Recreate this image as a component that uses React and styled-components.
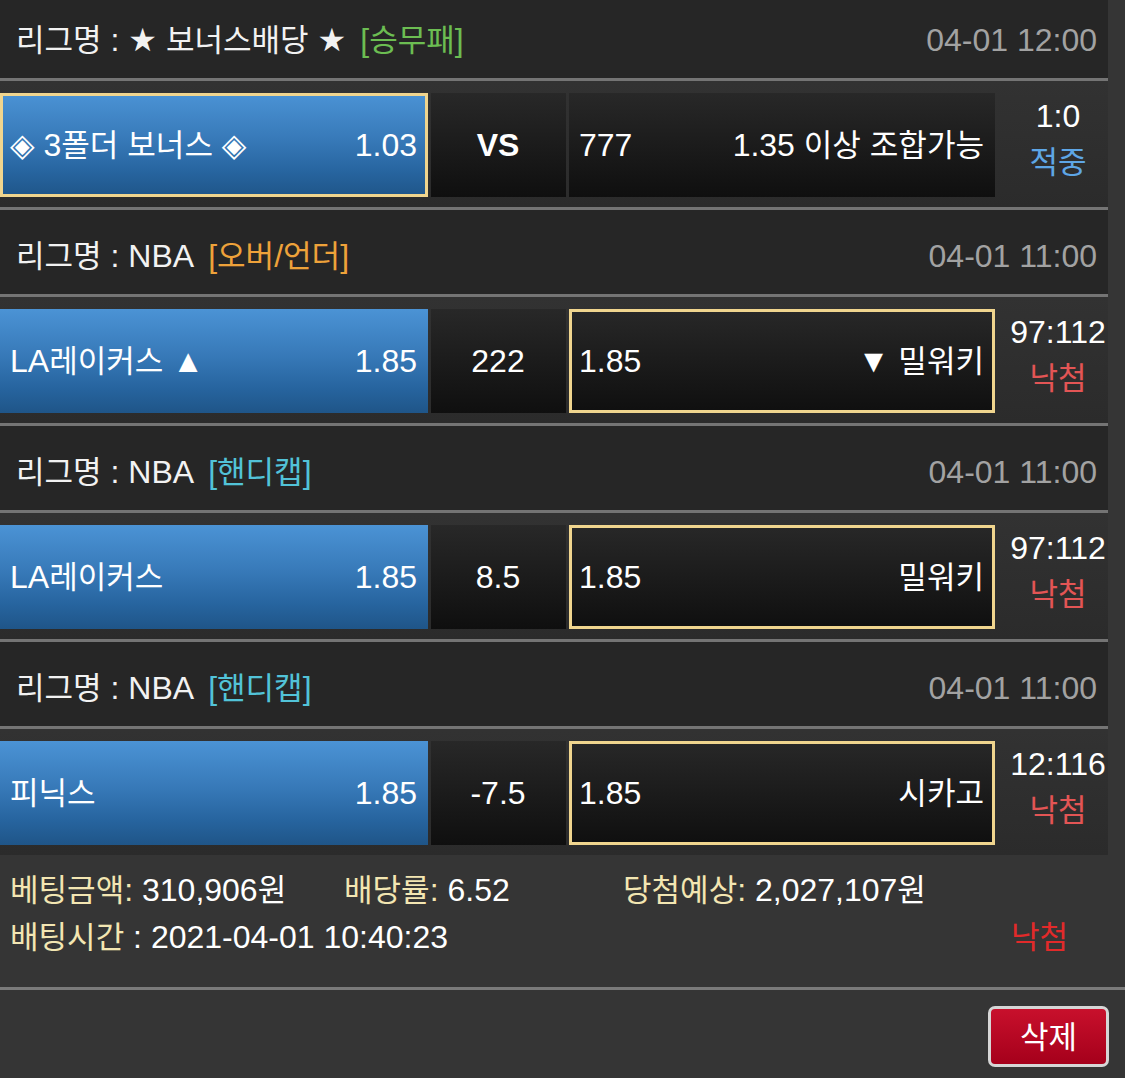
import React from "react";
import styled, { createGlobalStyle } from "styled-components";

const GlobalStyle = createGlobalStyle`
  html, body { margin: 0; padding: 0; background: #353535; }
  body {
    font-family: "Liberation Sans", Arial, "DejaVu Sans", "Noto Sans CJK KR", sans-serif;
    color: #fff;
    -webkit-font-smoothing: antialiased;
  }
`;

const Page = styled.div`
  width: 1125px;
  height: 1078px;
  overflow: hidden;
  background: #353535;
`;

const List = styled.div`
  width: 1108px;
  margin-top: -6px;
`;

const Block = styled.section`
  border-bottom: 3px solid #747474;
  &:last-child { border-bottom: none; }
`;

const Header = styled.div`
  height: 87px;
  box-sizing: border-box;
  padding: 8px 11px 0 16px;
  display: flex;
  align-items: center;
  justify-content: space-between;
  background: #262626;
  border-bottom: 3px solid #747474;
  font-size: 32px;
  line-height: 40px;
  white-space: nowrap;
`;

const LeagueName = styled.div`
  color: #f2f2f2;
`;

const Tag = styled.span`
  margin-left: 14px;
  color: ${(p) => p.$color};
`;

const Time = styled.div`
  color: #a2a2a2;
`;

const K = styled.span`
  font-family: "Noto Sans CJK KR", sans-serif;
  font-size: 0.97em;
  letter-spacing: 0;
  line-height: 1;
`;

const MatchRow = styled.div`
  height: 126px;
  box-sizing: border-box;
  padding: 12px 0 10px;
  display: grid;
  grid-template-columns: 428px 135px 426px 1fr;
  column-gap: 3px;
  background: linear-gradient(#323232, #2b2b2b);
`;

const Cell = styled.div`
  box-sizing: border-box;
  display: flex;
  align-items: center;
  justify-content: ${(p) => (p.$center ? "center" : "space-between")};
  padding: 0 8px 0 7px;
  border: 3px solid ${(p) => (p.$sel ? "#f0d58e" : "transparent")};
  background: ${(p) =>
    p.$blue
      ? "linear-gradient(#4b93d5 0%, #3779b8 45%, #2765a0 75%, #1f5588 100%)"
      : "linear-gradient(#282828, #0f0f0f)"};
  background-origin: border-box;
  font-size: 32px;
  line-height: 40px;
  font-weight: ${(p) => (p.$bold ? 700 : 400)};
  white-space: nowrap;
  color: #fff;
`;

const Result = styled.div`
  padding-left: 10px;
  display: flex;
  flex-direction: column;
  align-items: center;
  font-size: 32px;
  line-height: 46px;
  white-space: nowrap;
`;

const Status = styled.span`
  color: ${(p) => p.$color};
`;

const Summary = styled.div`
  padding: 12px 0 26px 10px;
  background: #353535;
  font-size: 32px;
  line-height: 47px;
  white-space: nowrap;
`;

const SumLine = styled.div`
  display: grid;
  grid-template-columns: 334px 279px 1fr;
`;

const SumLine2 = styled.div`
  display: flex;
  justify-content: space-between;
  padding-right: 57px;
`;

const Label = styled.span`
  color: #f3e6b2;
`;

const Lost = styled.span`
  color: #e22a2a;
`;

const Footer = styled.div`
  border-top: 3px solid #7a7a7a;
  padding: 16px 16px 0 0;
  display: flex;
  justify-content: flex-end;
`;

const DeleteButton = styled.button`
  width: 121px;
  height: 61px;
  box-sizing: border-box;
  border: 3px solid #d6d6d6;
  border-radius: 7px;
  background: linear-gradient(#c8102c, #a5001b);
  color: #fff;
  font-size: 32px;
  font-family: inherit;
  line-height: 40px;
  padding: 0;
  cursor: pointer;
`;

function Txt({ s }) {
  return s
    .split(/([\u3131-\u318E\uAC00-\uD7A3]+)/)
    .map((p, i) => (i % 2 ? <K key={i}>{p}</K> : <React.Fragment key={i}>{p}</React.Fragment>));
}

const STATUS = {
  hit: { text: "적중", color: "#5ea6e6" },
  lose: { text: "낙첨", color: "#e35555" },
};

const games = [
  {
    league: "리그명 : ★ 보너스배당 ★",
    tag: "[승무패]",
    tagColor: "#6cbd52",
    time: "04-01 12:00",
    home: "◈ 3폴더 보너스 ◈",
    homeOdds: "1.03",
    mid: "VS",
    bold: true,
    awayOdds: "777",
    away: "1.35 이상 조합가능",
    pick: "home",
    score: "1:0",
    status: "hit",
  },
  {
    league: "리그명 : NBA",
    tag: "[오버/언더]",
    tagColor: "#eea23a",
    time: "04-01 11:00",
    home: "LA레이커스 ▲",
    homeOdds: "1.85",
    mid: "222",
    awayOdds: "1.85",
    away: "▼ 밀워키",
    pick: "away",
    score: "97:112",
    status: "lose",
  },
  {
    league: "리그명 : NBA",
    tag: "[핸디캡]",
    tagColor: "#52c3d8",
    time: "04-01 11:00",
    home: "LA레이커스",
    homeOdds: "1.85",
    mid: "8.5",
    awayOdds: "1.85",
    away: "밀워키",
    pick: "away",
    score: "97:112",
    status: "lose",
  },
  {
    league: "리그명 : NBA",
    tag: "[핸디캡]",
    tagColor: "#52c3d8",
    time: "04-01 11:00",
    home: "피닉스",
    homeOdds: "1.85",
    mid: "-7.5",
    awayOdds: "1.85",
    away: "시카고",
    pick: "away",
    score: "12:116",
    status: "lose",
  },
];

export default function App() {
  return (
    <>
      <GlobalStyle />
      <Page>
        <List>
          {games.map((g, i) => (
            <Block key={i}>
              <Header>
                <LeagueName>
                  <Txt s={g.league} />
                  <Tag $color={g.tagColor}>
                    <Txt s={g.tag} />
                  </Tag>
                </LeagueName>
                <Time>{g.time}</Time>
              </Header>
              <MatchRow>
                <Cell $blue $sel={g.pick === "home"}>
                  <span><Txt s={g.home} /></span>
                  <span>{g.homeOdds}</span>
                </Cell>
                <Cell $center $bold={g.bold}>{g.mid}</Cell>
                <Cell $sel={g.pick === "away"}>
                  <span>{g.awayOdds}</span>
                  <span><Txt s={g.away} /></span>
                </Cell>
                <Result>
                  <span>{g.score}</span>
                  <Status $color={STATUS[g.status].color}>
                    <K>{STATUS[g.status].text}</K>
                  </Status>
                </Result>
              </MatchRow>
            </Block>
          ))}
        </List>
        <Summary>
          <SumLine>
            <span>
              <Label><Txt s="베팅금액:" /></Label> 310,906<K>원</K>
            </span>
            <span>
              <Label><Txt s="배당률:" /></Label> 6.52
            </span>
            <span>
              <Label><Txt s="당첨예상:" /></Label> 2,027,107<K>원</K>
            </span>
          </SumLine>
          <SumLine2>
            <span>
              <Label><Txt s="배팅시간" /></Label> : 2021-04-01 10:40:23
            </span>
            <Lost><K>낙첨</K></Lost>
          </SumLine2>
        </Summary>
        <Footer>
          <DeleteButton><K>삭제</K></DeleteButton>
        </Footer>
      </Page>
    </>
  );
}
